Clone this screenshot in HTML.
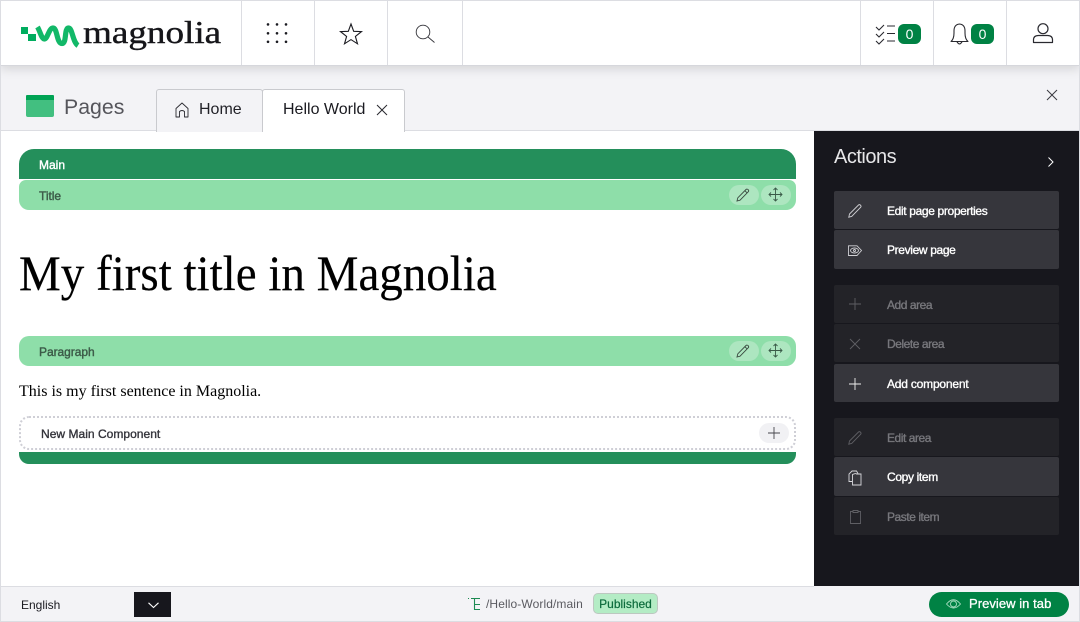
<!DOCTYPE html>
<html><head><meta charset="utf-8">
<style>
*{box-sizing:border-box}
html,body{margin:0;padding:0;width:1080px;height:622px;overflow:hidden;background:#fff;font-family:"Liberation Sans",sans-serif;color:#1a1a20}
.a{position:absolute}
.t{position:absolute;white-space:nowrap}
.v{position:absolute;top:1px;width:1px;height:64px;background:#dcdde2}
svg{position:absolute;overflow:visible;fill:none}
.btn{position:absolute;left:834px;width:225px;height:38px;border-radius:2px;background:#36363c}
.btn.d{background:#232328}
.btn span{position:absolute;left:53px;top:0;line-height:40px;font-size:12px;color:#fff;white-space:nowrap;letter-spacing:-.35px;-webkit-text-stroke:.35px #fff}
.btn.d span{color:#77777c;letter-spacing:-.45px;-webkit-text-stroke:.35px #77777c}
.bar{position:absolute;left:19px;width:777px;height:30px;background:#8edea9;border-radius:10px}
.bar span{position:absolute;left:20px;top:0;line-height:32px;font-size:12px;color:#3c5a48;white-space:nowrap;letter-spacing:-.05px;-webkit-text-stroke:.4px #3c5a48}
.pill{position:absolute;width:30px;height:20px;border-radius:10px;background:#ade6c0;top:5px}
.badge{position:absolute;top:24px;width:23px;height:20px;border-radius:6px;background:#008244;color:#fff;font-size:14px;line-height:20px;text-align:center}
</style></head><body>
<div class="a" style="left:0;top:0;width:1080px;height:622px;border:1px solid #dcdde2;z-index:9;pointer-events:none"></div>

<!-- header -->
<div class="a" style="left:0;top:66px;width:1080px;height:65px;background:#f3f3f6"></div>
<div class="a" style="left:0;top:0;width:1080px;height:66px;background:#fff;border-bottom:1px solid #d6d7dc;box-shadow:0 3px 10px rgba(0,0,0,.13)"></div>
<div class="v" style="left:241px"></div><div class="v" style="left:314px"></div><div class="v" style="left:387px"></div><div class="v" style="left:462px"></div>
<div class="v" style="left:860px"></div><div class="v" style="left:933px"></div><div class="v" style="left:1006px"></div>

<!-- logo -->
<svg style="left:0;top:0" width="100" height="60">
<rect x="21" y="27" width="7" height="7" fill="#00ad5f"/><rect x="28" y="34" width="8" height="7" fill="#00ad5f"/>
<path d="M37.500 27 C40 31 41.500 39 44.500 39 C47.500 39 49 28 53 28 C57.500 28 56.500 43.500 62 43.500 C67 43.500 64 28 68.500 28 C72.500 28 72.500 42 78 45.500" stroke="#12b868" stroke-width="5.200"/>
</svg>
<div class="t" style="left:83px;top:12px;font:32px/40px 'Liberation Serif',serif;color:#16161a;-webkit-text-stroke:.4px #16161a;transform:scaleX(1.16);transform-origin:0 0">magnolia</div>

<!-- grid icon -->
<svg style="left:266px;top:23px" width="22" height="22"><g fill="#1a1a20">
<circle cx="2" cy="1.400" r="1.300"/><circle cx="11" cy="1.400" r="1.300"/><circle cx="20" cy="1.400" r="1.300"/>
<circle cx="2" cy="10.300" r="1.300"/><circle cx="11" cy="10.300" r="1.300"/><circle cx="20" cy="10.300" r="1.300"/>
<circle cx="2" cy="18.800" r="1.300"/><circle cx="11" cy="18.800" r="1.300"/><circle cx="20" cy="18.800" r="1.300"/></g></svg>
<!-- star -->
<svg style="left:340px;top:23px" width="22" height="22"><path d="M11 1 L13.700 8.300 L21.500 8.600 L15.400 13.400 L17.500 20.800 L11 16.600 L4.500 20.800 L6.600 13.400 L.5 8.600 L8.300 8.300 Z" stroke="#1a1a20" stroke-width="1.100" stroke-linejoin="miter"/></svg>
<!-- search -->
<svg style="left:415px;top:24px" width="22" height="22"><circle cx="8" cy="8" r="6.800" stroke="#333339" stroke-width=".9"/><path d="M13 13 L19.500 18.500" stroke="#333339" stroke-width=".9"/></svg>
<!-- tasks -->
<svg style="left:875px;top:23px" width="24" height="22" stroke="#2a2a30" stroke-width="1.100">
<path d="M1 4 L4 7 L9 2 M1 11 L4 14 L9 9 M1 18 L4 21 L9 16"/><path d="M12 3 H20 M12 10.500 H20 M12 18 H20"/></svg>
<div class="badge" style="left:898px">0</div>
<!-- bell -->
<svg style="left:949px;top:23px" width="20" height="22" stroke="#2a2a30" stroke-width="1.100">
<path d="M2 18.500 Q5 16 5 10 V8 Q5 1.500 10.500 1 Q16 1.500 16 8 V10 Q16 16 19 18.500 Z" stroke-linejoin="round"/><path d="M8 18.800 Q10.500 23 13 18.800"/></svg>
<div class="badge" style="left:971px">0</div>
<!-- user -->
<svg style="left:1033px;top:23px" width="20" height="21" stroke="#2a2a30" stroke-width="1.200">
<circle cx="10" cy="5.700" r="5"/><path d="M.5 19.500 V17 Q.5 12.500 5.500 12.500 H14.500 Q19.500 12.500 19.500 17 V19.500 Z" stroke-linejoin="round"/></svg>

<!-- pages row -->
<div class="a" style="left:26px;top:95px;width:28px;height:4.500px;background:#00a354;border-radius:1px 1px 0 0"></div>
<div class="a" style="left:26px;top:100px;width:28px;height:17px;background:#42bf80;border-radius:0 0 2px 2px"></div>
<div class="t" style="left:64px;top:93px;font-size:21.300px;line-height:28px;color:#55555b">Pages</div>
<div class="a" style="left:0;top:130px;width:1080px;height:1px;background:#dcdde2"></div>
<div class="a" style="left:156px;top:89px;width:107px;height:43px;background:#f3f3f6;border:1px solid #c9cace;border-bottom:0;border-radius:3px 3px 0 0"></div>
<div class="a" style="left:262px;top:89px;width:143px;height:43px;background:#fff;border:1px solid #c9cace;border-bottom:0;border-radius:3px 3px 0 0"></div>
<svg style="left:175px;top:102px" width="14" height="16" stroke="#2a2a30" stroke-width=".9"><path d="M1 6.500 L7 1 L13 6.500 V15 H9.500 V9.500 Q7 7.500 4.500 9.500 V15 H1 Z" stroke-linejoin="round"/></svg>
<div class="t" style="left:199px;top:100px;font-size:16px;line-height:20px;color:#222228">Home</div>
<div class="t" style="left:283px;top:100px;font-size:16px;line-height:20px;color:#1a1a20">Hello World</div>
<svg style="left:377px;top:105px" width="10" height="10" stroke="#2a2a30" stroke-width="1"><path d="M0 0 L10 10 M10 0 L0 10"/></svg>
<svg style="left:1047px;top:90px" width="10" height="10" stroke="#3a3a40" stroke-width="1"><path d="M0 0 L10 10 M10 0 L0 10"/></svg>

<!-- content -->
<div class="a" style="left:19px;top:149px;width:777px;height:30px;background:#248f5b;border-radius:15px 15px 0 0"></div>
<div class="t" style="left:39px;top:149px;line-height:32px;font-size:12px;color:#fff;-webkit-text-stroke:.4px #fff">Main</div>
<div class="bar" style="top:180px;border-radius:0 0 10px 10px;border-top-left-radius:7px;border-top-right-radius:7px"><span>Title</span>
<div class="pill" style="left:710px"></div><div class="pill" style="left:742px"></div>
<svg style="left:717px;top:8px" width="14" height="14" stroke="#3a4a40" stroke-width=".9"><path d="M1 13 L1.800 9.800 L10 1.500 Q11 .5 12.200 1.700 Q13.200 2.900 12.200 3.800 L4 12.200 Z M9 2.800 L11 4.800"/></svg>
<svg style="left:750px;top:8px" width="13" height="13" stroke="#3a5a48" stroke-width=".9"><path d="M6.500 0 V13 M0 6.500 H13 M4.500 2 L6.500 0 L8.500 2 M4.500 11 L6.500 13 L8.500 11 M2 4.500 L0 6.500 L2 8.500 M11 4.500 L13 6.500 L11 8.500"/></svg>
</div>
<div class="t" style="left:19px;top:245px;font:50px/56px 'Liberation Serif',serif;color:#000;transform:scaleX(.94);transform-origin:0 0;-webkit-text-stroke:.2px #000">My first title in Magnolia</div>
<div class="bar" style="top:336px"><span>Paragraph</span>
<div class="pill" style="left:710px"></div><div class="pill" style="left:742px"></div>
<svg style="left:717px;top:8px" width="14" height="14" stroke="#3a4a40" stroke-width=".9"><path d="M1 13 L1.800 9.800 L10 1.500 Q11 .5 12.200 1.700 Q13.200 2.900 12.200 3.800 L4 12.200 Z M9 2.800 L11 4.800"/></svg>
<svg style="left:750px;top:8px" width="13" height="13" stroke="#3a5a48" stroke-width=".9"><path d="M6.500 0 V13 M0 6.500 H13 M4.500 2 L6.500 0 L8.500 2 M4.500 11 L6.500 13 L8.500 11 M2 4.500 L0 6.500 L2 8.500 M11 4.500 L13 6.500 L11 8.500"/></svg>
</div>
<div class="t" style="left:19px;top:381px;font:16px/21px 'Liberation Serif',serif;color:#000">This is my first sentence in Magnolia.</div>
<div class="a" style="left:19px;top:416px;width:777px;height:34px;border:2px dotted #cfcfd6;border-radius:10px"></div>
<div class="t" style="left:41px;top:426px;line-height:16px;font-size:12px;color:#33333a;letter-spacing:.03px;-webkit-text-stroke:.35px #33333a">New Main Component</div>
<div class="a" style="left:759px;top:423px;width:30px;height:20px;border-radius:10px;background:#f1f1f4"></div>
<svg style="left:768px;top:427px" width="12" height="12" stroke="#45454b" stroke-width=".9"><path d="M6 0 V12 M0 6 H12"/></svg>
<div class="a" style="left:19px;top:452px;width:777px;height:12px;background:#248f5b;border-radius:0 0 10px 10px"></div>

<!-- actions panel -->
<div class="a" style="left:814px;top:131px;width:266px;height:455px;background:#17171d"></div>
<div class="t" style="left:834px;top:144px;font-size:20px;line-height:27px;color:#e6e6e8;letter-spacing:-.5px">Actions</div>
<svg style="left:1048px;top:157px" width="6" height="10" stroke="#fff" stroke-width="1"><path d="M.5 .5 L5 5 L.5 9.500"/></svg>

<div class="btn" style="top:191px"><span>Edit page properties</span></div>
<div class="btn" style="top:230px;height:39px"><span>Preview page</span></div>
<div class="btn d" style="top:285px"><span>Add area</span></div>
<div class="btn d" style="top:324px"><span>Delete area</span></div>
<div class="btn" style="top:364px"><span style="letter-spacing:-.2px">Add component</span></div>
<div class="btn d" style="top:418px"><span>Edit area</span></div>
<div class="btn" style="top:457px;height:39px"><span>Copy item</span></div>
<div class="btn d" style="top:497px"><span>Paste item</span></div>

<svg style="left:848px;top:204px" width="14" height="14" stroke="#d0d0d4" stroke-width=".9"><path d="M.8 13.200 L1.500 10 L10.500 1 Q11.500 .2 12.500 1.200 Q13.500 2.200 12.700 3.200 L3.800 12.300 Z"/></svg>
<svg style="left:848px;top:245px" width="14" height="12" stroke="#d0d0d4" stroke-width=".9"><path d="M.5 .8 H9 L13.500 5.500 L9 10.500 H.5 Z"/><ellipse cx="6.500" cy="5.500" rx="4" ry="2.500"/><circle cx="6.500" cy="5.500" r="1"/></svg>
<svg style="left:849px;top:298px" width="12" height="12" stroke="#5f5f64" stroke-width=".9"><path d="M6 0 V12 M0 6 H12"/></svg>
<svg style="left:850px;top:339px" width="10" height="10" stroke="#5f5f64" stroke-width=".9"><path d="M0 0 L10 10 M10 0 L0 10"/></svg>
<svg style="left:849px;top:378px" width="12" height="12" stroke="#f0f0f0" stroke-width=".9"><path d="M6 0 V12 M0 6 H12"/></svg>
<svg style="left:848px;top:431px" width="14" height="14" stroke="#5f5f64" stroke-width=".9"><path d="M.8 13.200 L1.500 10 L10.500 1 Q11.500 .2 12.500 1.200 Q13.500 2.200 12.700 3.200 L3.800 12.300 Z"/></svg>
<svg style="left:848px;top:470px" width="14" height="16" stroke="#d8d8dc" stroke-width=".9"><path d="M4 11.500 H1 V4 L4 1 H8.500 L10 3.500"/><path d="M4.500 4.500 Q8 3 8.500 4 H13 V15 H4.500 Z"/></svg>
<svg style="left:850px;top:510px" width="11" height="14" stroke="#5f5f64" stroke-width=".9"><path d="M3 1.500 H.5 V13.500 H10.500 V1.500 H8 M3 .5 H8 V2.500 H3 Z"/></svg>

<!-- footer -->
<div class="a" style="left:0;top:586px;width:1080px;height:36px;background:#f3f3f6;border-top:1px solid #dcdde2"></div>
<div class="a" style="left:814px;top:586px;width:266px;height:1px;background:#f3f3f6"></div>
<div class="t" style="left:21px;top:597px;font-size:12px;line-height:16px;color:#1a1a20">English</div>
<div class="a" style="left:134px;top:592px;width:37px;height:25px;background:#17171d"></div>
<svg style="left:148px;top:602px" width="11" height="7" stroke="#fff" stroke-width="1.100"><path d="M.5 .8 L5.500 5.500 L10.500 .8"/></svg>
<svg style="left:468px;top:597px" width="13" height="14" stroke="#1c8a52" stroke-width="1.100"><path d="M0 1.500 H1 M3 1.500 H12 M6.500 1.500 V12.500 H12 M6.500 7.500 H12"/></svg>
<div class="t" style="left:486px;top:596px;font-size:12px;line-height:16px;color:#5a5a60;letter-spacing:.1px">/Hello-World/main</div>
<div class="a" style="left:593px;top:593px;width:65px;height:21px;background:#b4ecc5;border:1px solid #bcc8c0;border-radius:5px;font-size:12px;line-height:20px;text-align:center;color:#0c6b3c;-webkit-text-stroke:.2px #0c6b3c">Published</div>
<div class="a" style="left:929px;top:592px;width:140px;height:25px;background:#008244;border-radius:13px"></div>
<svg style="left:946px;top:598px" width="15" height="12" stroke="#a8dcc0" stroke-width=".9"><path d="M.5 6 Q7.500 -2.500 14.500 6 Q7.500 14 .5 6 Z"/><circle cx="7.500" cy="6" r="3"/></svg>
<div class="t" style="left:969px;top:596px;font-size:13px;line-height:16px;color:#fff;letter-spacing:.05px;-webkit-text-stroke:.3px #fff">Preview in tab</div>
</body></html>
